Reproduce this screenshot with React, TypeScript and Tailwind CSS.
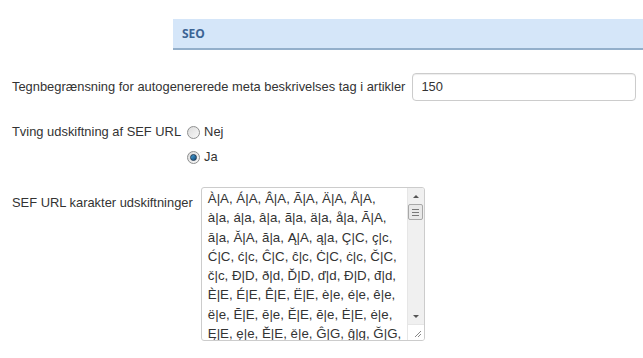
const lines = [
  "À|A, Á|A, Â|A, Ã|A, Ä|A, Å|A,",
  "à|a, á|a, â|a, ã|a, ä|a, å|a, Ā|A,",
  "ā|a, Ă|A, ă|a, Ą|A, ą|a, Ç|C, ç|c,",
  "Ć|C, ć|c, Ĉ|C, ĉ|c, Ċ|C, ċ|c, Č|C,",
  "č|c, Ð|D, ð|d, Ď|D, ď|d, Đ|D, đ|d,",
  "È|E, É|E, Ê|E, Ë|E, è|e, é|e, ê|e,",
  "ë|e, Ē|E, ē|e, Ĕ|E, ĕ|e, Ė|E, ė|e,",
  "Ę|E, ę|e, Ě|E, ě|e, Ĝ|G, ĝ|g, Ğ|G,",
  "ğ|g, Ġ|G, ġ|g, Ģ|G, ģ|g, Ĥ|H, ĥ|h,",
];

export default function App() {
  return (
    <main className="w-[643px] h-[358px] overflow-hidden bg-white text-[12.9px] text-[#333] font-['Liberation_Sans',Arial,sans-serif]">
      <div className="ml-[173px] mt-[19px] h-[31px] bg-[#d5e6f9] border-b-2 border-[#93afcb] flex items-center pl-[9px]">
        <span className="font-['Open_Sans',sans-serif] font-bold text-[12px] text-[#3c6494]">SEO</span>
      </div>

      <div className="mt-[23px] pl-[12px] flex items-center gap-[7px]">
        <label className="whitespace-nowrap shrink-0">Tegnbegrænsning for autogenererede meta beskrivelses tag i artikler</label>
        <div className="w-[224px] h-[28px] shrink-0 border border-[#ccc] rounded-[4px] shadow-[inset_0_1px_1px_rgba(0,0,0,0.075)] flex items-center px-[8px]">
          150
        </div>
      </div>

      <div className="mt-[21px] pl-[12px] flex items-start gap-[6px]">
        <label className="leading-[20px] whitespace-nowrap">Tving udskiftning af SEF URL</label>
        <div className="flex flex-col gap-[5px]">
          <Radio label="Nej" />
          <Radio label="Ja" checked />
        </div>
      </div>

      <div className="mt-[20px] pl-[12px] flex items-start gap-[8px]">
        <label className="mt-[6px] whitespace-nowrap">SEF URL karakter udskiftninger</label>
        <div className="w-[224px] h-[154px] shrink-0 border border-[#ccc] rounded-[3px] flex overflow-hidden">
          <div className="flex-1 overflow-hidden pl-[6px] pt-[1px] text-[13.3px] leading-[19.3px] whitespace-nowrap">
            {lines.map((l) => (
              <div key={l}>{l}</div>
            ))}
          </div>
          <div className="w-[17px] flex flex-col">
            <div className="flex-1 bg-[#f0f0f0] border-l border-[#e6e6e6] flex flex-col items-center">
              <div className="h-[16px] flex items-center justify-center">
                <div className="w-0 h-0 border-l-[3px] border-r-[3px] border-b-[3px] border-l-transparent border-r-transparent border-b-[#555]" />
              </div>
              <div className="w-[15px] h-[16px] bg-[#e8e8e8] border border-[#a8a8a8] rounded-[2px] flex flex-col items-center justify-center gap-[2px]">
                <div className="w-[7px] h-px bg-[#777]" />
                <div className="w-[7px] h-px bg-[#777]" />
                <div className="w-[7px] h-px bg-[#777]" />
              </div>
              <div className="flex-1" />
              <div className="h-[16px] flex items-center justify-center">
                <div className="w-0 h-0 border-l-[3px] border-r-[3px] border-t-[3px] border-l-transparent border-r-transparent border-t-[#555]" />
              </div>
            </div>
            <div className="h-[16px] bg-white border-l border-t border-[#e6e6e6] flex items-end justify-end p-[2px]">
              <svg width="8" height="8" viewBox="0 0 8 8">
                <path d="M7 1 L1 7 M7 4 L4 7" stroke="#888" strokeWidth="1" />
              </svg>
            </div>
          </div>
        </div>
      </div>
    </main>
  );
}

function Radio({ label, checked }: { label: string; checked?: boolean }) {
  return (
    <div className="flex items-center gap-[4px] h-[20px]">
      <span className="w-[13px] h-[13px] rounded-full border border-[#8e8f8f] bg-gradient-to-br from-[#dcdcdc] to-[#f8f8f8] flex items-center justify-center">
        {checked && (
          <span className="w-[7px] h-[7px] rounded-full bg-gradient-to-br from-[#4aa3d8] to-[#0d4a7c] border border-[#1f3a55]" />
        )}
      </span>
      <span>{label}</span>
    </div>
  );
}
